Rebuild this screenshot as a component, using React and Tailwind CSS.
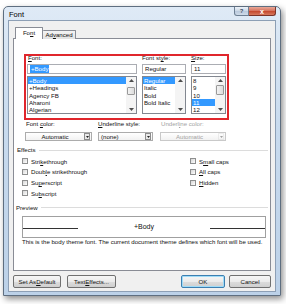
import React from "react";

const FONT_NAMES = ["+Body", "+Headings", "Agency FB", "Aharoni", "Algerian"];
const STYLES = ["Regular", "Italic", "Bold", "Bold Italic"];
const SIZES = ["8", "9", "10", "11", "12"];

function K({ children }) {
  return <span className="underline underline-offset-[1px] decoration-[0.5px]">{children}</span>;
}

function Arrow({ up = false, className = "" }) {
  return (
    <svg width="5" height="3" viewBox="0 0 5 3" className={className}>
      <path d={up ? "M0 3 L2.5 0 L5 3 Z" : "M0 0 L5 0 L2.5 3 Z"} fill="#4d4d4d" />
    </svg>
  );
}

function ScrollBar({ thumb }) {
  return (
    <div className="flex h-full w-[10px] shrink-0 flex-col items-center bg-[#f4f4f4]">
      <div className="flex h-[7px] w-full items-center justify-center">
        <Arrow up />
      </div>
      <div className="flex w-full flex-1 flex-col items-center">
        {thumb ? (
          <div
            className="w-[8px] rounded-[1px] border border-[#9a9a9a] bg-[linear-gradient(90deg,#f3f3f3,#dcdcdc)]"
            style={{ marginTop: thumb[0], height: thumb[1] }}
          />
        ) : null}
      </div>
      <div className="flex h-[7px] w-full items-center justify-center">
        <Arrow />
      </div>
    </div>
  );
}

function ListBox({ items, selected, thumb }) {
  return (
    <div className="flex h-[38px] border border-[#828790] bg-white">
      <div className="flex-1 overflow-hidden">
        {items.map((item) => (
          <div
            key={item}
            className={[
              "h-[7.3px] pl-[1px] leading-[7.3px] whitespace-nowrap",
              item === selected ? "bg-[#3399ff] text-white" : "",
            ].join(" ")}
          >
            {item}
          </div>
        ))}
      </div>
      <ScrollBar thumb={thumb} />
    </div>
  );
}

function TextBox({ children }) {
  return (
    <div className="flex h-[10px] items-center border border-[#abadb3] bg-white pl-[2px] leading-[8px]">
      {children}
    </div>
  );
}

function DropDown({ value, disabled = false, center = false }) {
  return (
    <div
      className={[
        "flex h-[9px] items-center border bg-[linear-gradient(180deg,#ffffff,#f2f2f2)]",
        disabled ? "border-[#c9c9c9] text-[#a3a3a3]" : "border-[#acacac]",
      ].join(" ")}
    >
      <div className={["flex-1 leading-[7px]", center ? "text-center" : "pl-[2px]"].join(" ")}>{value}</div>
      <div
        className={[
          "flex h-[7px] w-[6px] items-center justify-center border mr-[1px]",
          disabled ? "border-[#d5d5d5] opacity-40" : "border-[#8c8c8c] bg-[#e9e9e9]",
        ].join(" ")}
      >
        <svg width="3" height="2" viewBox="0 0 3 2">
          <path d="M0 0 L3 0 L1.5 2 Z" fill="#222" />
        </svg>
      </div>
    </div>
  );
}

function Check({ children }) {
  return (
    <div className="flex h-[10.7px] items-center gap-[3px]">
      <div className="h-[6px] w-[6px] border border-[#8e8f8f] bg-[linear-gradient(135deg,#d6d6d6,#ffffff)]" />
      <span>{children}</span>
    </div>
  );
}

function Button({ children, primary = false, className = "" }) {
  return (
    <div
      className={[
        "flex h-[13px] items-center justify-center rounded-[2px] border bg-[linear-gradient(180deg,#f6f6f6_0%,#ebebeb_50%,#dddddd_51%,#cfcfcf_100%)]",
        primary ? "border-[#3c7fb1] shadow-[inset_0_0_0_1px_#9fdcf8]" : "border-[#707070]",
        className,
      ].join(" ")}
    >
      {children}
    </div>
  );
}

function GroupLabel({ children, className = "" }) {
  return (
    <div className={["flex h-[8px] items-center gap-[3px] pr-[2px] leading-[8px]", className].join(" ")}>
      <span>{children}</span>
      <div className="h-px flex-1 bg-[#dcdcdc]" />
    </div>
  );
}

export default function App() {
  return (
    <div
      className="h-[304px] w-[286px] overflow-hidden bg-white pt-[6px] pl-[3px] text-[6.1px] text-[#111]"
      style={{ fontFamily: '"Liberation Sans", Arial, sans-serif' }}
    >
      <div className="flex h-[290px] w-[278px] flex-col rounded-t-[5px] border border-[#5e6e80] bg-[linear-gradient(180deg,#dfeaf6_0%,#c9dbee_40%,#bcd1e8_100%)] px-[4px] shadow-[2px_3px_6px_rgba(0,0,0,0.45)]">
        {/* title bar */}
        <div className="flex h-[13px] items-start">
          <div className="pt-[3px] pl-[1px] text-[7.5px] leading-[9px] text-black">Font</div>
          <div className="ml-auto flex h-[9px]">
            <div className="flex w-[15px] items-center justify-center rounded-bl-[3px] border border-t-0 border-[#6d7f93] bg-[linear-gradient(180deg,#eef3f9,#cad7e6_50%,#b8c8dc_51%,#cfdbe9)] text-[6px] font-bold leading-none text-[#3b4a5c]">
              ?
            </div>
            <div className="flex w-[27px] items-center justify-center rounded-br-[3px] border border-t-0 border-l-0 border-[#7a3328] bg-[linear-gradient(180deg,#e9a898,#d4705b_50%,#c3462c_51%,#d6795e)] text-[7px] font-bold leading-none text-white">
              x
            </div>
          </div>
        </div>

        {/* client area */}
        <div className="flex h-[272px] flex-col border border-[#8d9fb5] bg-[#f0f0f0]">
          {/* tabs */}
          <div className="relative z-10 -mb-px mt-[6px] ml-[6px] flex h-[12px] items-end">
            <div className="flex h-[12px] w-[28px] items-center justify-center rounded-t-[1px] border border-b-0 border-[#898c95] bg-white pb-[1px]">
              Fo<K>n</K>t
            </div>
            <div className="flex h-[9px] w-[33px] items-center justify-center rounded-t-[1px] border border-l-0 border-b-0 border-[#898c95] bg-[linear-gradient(180deg,#f3f3f3,#e2e2e2)]">
              Ad<K>v</K>anced
            </div>
          </div>

          {/* tab panel */}
          <div className="relative ml-[4px] h-[233px] w-[258px] border border-[#898c95] bg-white">
            <div className="pointer-events-none absolute left-[10px] top-[15px] h-[66px] w-[205px] border-2 border-[#e0262c]" />

            {/* font / style / size */}
            <div className="mt-[15px] ml-[13px] flex gap-[5px]">
              <div className="w-[110px]">
                <div className="h-[10px] pl-[1px] leading-[8px]">
                  <K>F</K>ont:
                </div>
                <TextBox>
                  <span className="bg-[#3399ff] px-[1px] text-white">+Body</span>
                </TextBox>
                <div className="mt-[2px]">
                  <ListBox items={FONT_NAMES} selected="+Body" thumb={[3, 8]} />
                </div>
              </div>
              <div className="w-[44px]">
                <div className="h-[10px] leading-[8px]">
                  Font st<K>y</K>le:
                </div>
                <TextBox>Regular</TextBox>
                <div className="mt-[2px]">
                  <ListBox items={STYLES} selected="Regular" />
                </div>
              </div>
              <div className="w-[35px]">
                <div className="h-[10px] leading-[8px]">
                  <K>S</K>ize:
                </div>
                <TextBox>11</TextBox>
                <div className="mt-[2px]">
                  <ListBox items={SIZES} selected="11" thumb={[1, 10]} />
                </div>
              </div>
            </div>

            {/* colour / underline */}
            <div className="mt-[6px] ml-[11px] flex">
              <div className="w-[67px]">
                <div className="h-[12px] pl-[1px] leading-[8px]">
                  Font <K>c</K>olor:
                </div>
                <DropDown value="Automatic" center />
              </div>
              <div className="ml-[6px] w-[55px]">
                <div className="h-[12px] leading-[8px]">
                  <K>U</K>nderline style:
                </div>
                <DropDown value="(none)" />
              </div>
              <div className="ml-[7px] w-[66px]">
                <div className="h-[12px] pl-[1px] leading-[8px] text-[#a3a3a3]">
                  Underl<K>i</K>ne color:
                </div>
                <DropDown value="Automatic" disabled center />
              </div>
            </div>

            {/* effects */}
            <GroupLabel className="mt-[5px] pl-[3px]">Effects</GroupLabel>
            <div className="mt-[2px] grid grid-cols-[168px_1fr] pl-[8px]">
              <div>
                <Check>
                  Stri<K>k</K>ethrough
                </Check>
                <Check>
                  Doub<K>l</K>e strikethrough
                </Check>
                <Check>
                  Su<K>p</K>erscript
                </Check>
                <Check>
                  Su<K>b</K>script
                </Check>
              </div>
              <div>
                <Check>
                  S<K>m</K>all caps
                </Check>
                <Check>
                  <K>A</K>ll caps
                </Check>
                <Check>
                  <K>H</K>idden
                </Check>
              </div>
            </div>

            {/* preview */}
            <GroupLabel className="mt-[5px] pl-[2px]">Preview</GroupLabel>
            <div className="mt-[4px] ml-[8px] flex h-[22px] w-[244px] items-center border border-[#a0a0a0] bg-white">
              <div className="mt-[4px] h-px w-[55px] bg-[#333]" />
              <div className="flex-1 text-center text-[7px] leading-[8px]">+Body</div>
              <div className="mt-[4px] h-px w-[55px] bg-[#333]" />
            </div>
            <div className="ml-[8px] h-[8px] leading-[8px] whitespace-nowrap">
              This is the body theme font. The current document theme defines which font will be used.
            </div>
          </div>

          {/* buttons */}
          <div className="mt-[4px] ml-[4px] mr-[4px] flex">
            <Button className="w-[48px]">
              Set As <K>D</K>efault
            </Button>
            <Button className="ml-[6px] w-[49px]">
              Text <K>E</K>ffects...
            </Button>
            <Button primary className="ml-auto w-[44px]">
              OK
            </Button>
            <Button className="ml-[4px] w-[42px]">Cancel</Button>
          </div>
        </div>
      </div>
    </div>
  );
}
